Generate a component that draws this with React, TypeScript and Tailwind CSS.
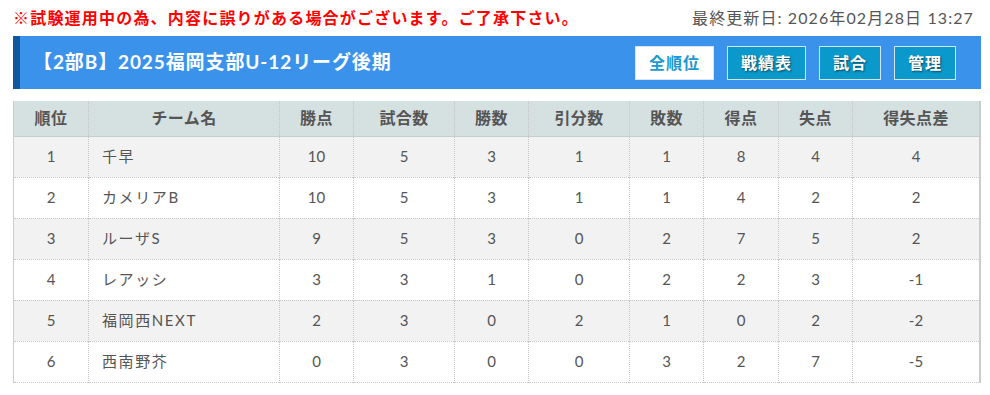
import React from "react";

const cols = [
  { label: "順位", w: "w-[75px]" },
  { label: "チーム名", w: "w-[191px]" },
  { label: "勝点", w: "w-[74px]" },
  { label: "試合数", w: "w-[101px]" },
  { label: "勝数", w: "w-[74px]" },
  { label: "引分数", w: "w-[101px]" },
  { label: "敗数", w: "w-[74px]" },
  { label: "得点", w: "w-[75px]" },
  { label: "失点", w: "w-[74px]" },
  { label: "得失点差", w: "" },
];

const rows = [
  ["1", "千早", "10", "5", "3", "1", "1", "8", "4", "4"],
  ["2", "カメリアB", "10", "5", "3", "1", "1", "4", "2", "2"],
  ["3", "ルーザS", "9", "5", "3", "0", "2", "7", "5", "2"],
  ["4", "レアッシ", "3", "3", "1", "0", "2", "2", "3", "-1"],
  ["5", "福岡西NEXT", "2", "3", "0", "2", "1", "0", "2", "-2"],
  ["6", "西南野芥", "0", "3", "0", "0", "3", "2", "7", "-5"],
];

export default function App() {
  return (
    <div
      className="w-[990px] h-[395px] bg-white pl-[13px] pr-[9px]"
      style={{ fontFamily: "Lato, 'Noto Sans CJK JP', sans-serif" }}
    >
      <div className="h-[36px] flex items-center justify-between">
        <div className="text-[16px] font-bold text-[#ff0000] tracking-[1.2px] leading-none">
          ※試験運用中の為、内容に誤りがある場合がございます。ご了承下さい。
        </div>
        <div className="text-[16px] text-[#555] tracking-[1.1px] leading-none pr-[7px]">
          最終更新日: 2026年02月28日 13:27
        </div>
      </div>
      <div className="h-[53px] bg-[#3a92eb] border-l-[7px] border-[#1059a0] flex items-center justify-between pl-[13px] pr-[25px]">
        <div className="text-white font-bold text-[19px] tracking-[0.9px]">
          【2部B】2025福岡支部U-12リーグ後期
        </div>
        <div className="flex gap-[13px]">
          <div className="w-[79px] h-[34px] bg-white border border-[#d8e4ec] flex items-center justify-center text-[#1a98d2] font-bold text-[16px] tracking-[1px]">
            全順位
          </div>
          <div className="w-[79px] h-[34px] bg-[#0b99cb] border border-[#cfe6f0] flex items-center justify-center text-white font-bold text-[16px] tracking-[1px] [text-shadow:1px_1px_2px_rgba(0,0,0,0.55)]">
            戦績表
          </div>
          <div className="w-[62px] h-[34px] bg-[#0b99cb] border border-[#cfe6f0] flex items-center justify-center text-white font-bold text-[16px] tracking-[1px] [text-shadow:1px_1px_2px_rgba(0,0,0,0.55)]">
            試合
          </div>
          <div className="w-[62px] h-[34px] bg-[#0b99cb] border border-[#cfe6f0] flex items-center justify-center text-white font-bold text-[16px] tracking-[1px] [text-shadow:1px_1px_2px_rgba(0,0,0,0.55)]">
            管理
          </div>
        </div>
      </div>
      <table className="mt-[12px] w-[968px] border-collapse border-l border-r-2 border-[#cccccc] table-fixed text-[15px] text-[#555]">
        <thead>
          <tr className="h-[35px] bg-[#d5e0e1] border-b border-[#c6cfd0]">
            {cols.map((c, i) => (
              <th
                key={i}
                className={`${c.w} font-bold text-[16px] text-[#555] tracking-[0.4px] border-l border-dotted border-[#c4c4c4] first:border-l-0`}
              >
                {c.label}
              </th>
            ))}
          </tr>
        </thead>
        <tbody>
          {rows.map((r, ri) => (
            <tr
              key={ri}
              className={`h-[41px] border-b border-dotted border-[#c8c8c8] ${ri % 2 === 0 ? "bg-[#f2f2f2]" : "bg-white"}`}
            >
              {r.map((v, ci) => (
                <td
                  key={ci}
                  className={`border-l border-dotted border-[#c8c8c8] first:border-l-0 ${ci === 1 ? "text-left pl-[13px] tracking-[1.6px]" : "text-center"}`}
                >
                  {v}
                </td>
              ))}
            </tr>
          ))}
        </tbody>
      </table>
    </div>
  );
}
